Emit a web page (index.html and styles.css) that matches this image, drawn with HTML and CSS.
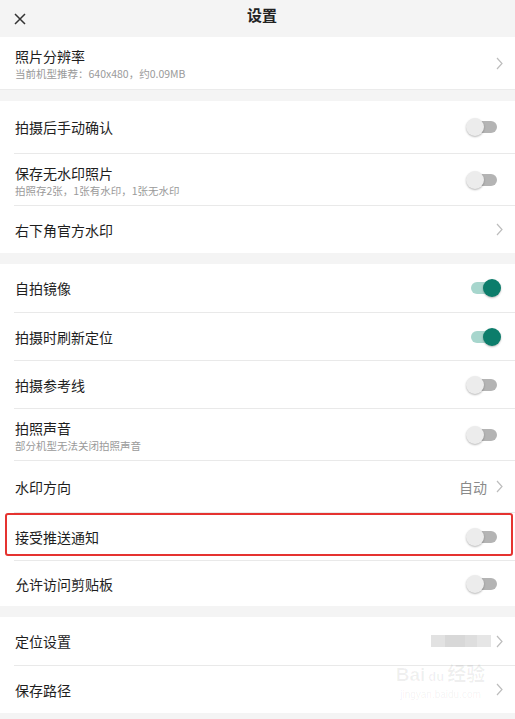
FILE: index.html
```html
<!DOCTYPE html>
<html lang="zh-CN">
<head>
    <meta charset="UTF-8">
    <title>设置</title>
    <link rel="stylesheet" href="styles.css">
</head>
<body>
<div class="page">
    <div class="topbar">
        <span class="close">
            <svg width="12" height="12" viewBox="0 0 12 12"><path d="M1 1L11 11M11 1L1 11" stroke="#333" stroke-width="1.5" fill="none"/></svg>
        </span>
        <h1>设置</h1>
    </div>

    <div class="group first">
        <div class="row tall">
            <div class="text">
                <div class="title">照片分辨率</div>
                <div class="sub">当前机型推荐：640x480，约0.09MB</div>
            </div>
            <svg class="arrow" width="7" height="13" viewBox="0 0 7 13"><path d="M1 1L6 6.5L1 12" stroke="#bdbdbd" stroke-width="1.2" fill="none"/></svg>
        </div>
    </div>

    <div class="group">
        <div class="row tall">
            <div class="title">拍摄后手动确认</div>
            <span class="switch"><span class="knob"></span></span>
        </div>
        <div class="row tall">
            <div class="text">
                <div class="title">保存无水印照片</div>
                <div class="sub">拍照存2张，1张有水印，1张无水印</div>
            </div>
            <span class="switch"><span class="knob"></span></span>
        </div>
        <div class="row">
            <div class="title">右下角官方水印</div>
            <svg class="arrow" width="7" height="13" viewBox="0 0 7 13"><path d="M1 1L6 6.5L1 12" stroke="#bdbdbd" stroke-width="1.2" fill="none"/></svg>
        </div>
    </div>

    <div class="group">
        <div class="row">
            <div class="title">自拍镜像</div>
            <span class="switch on"><span class="knob"></span></span>
        </div>
        <div class="row">
            <div class="title">拍摄时刷新定位</div>
            <span class="switch on"><span class="knob"></span></span>
        </div>
        <div class="row">
            <div class="title">拍摄参考线</div>
            <span class="switch"><span class="knob"></span></span>
        </div>
        <div class="row tall">
            <div class="text">
                <div class="title">拍照声音</div>
                <div class="sub">部分机型无法关闭拍照声音</div>
            </div>
            <span class="switch"><span class="knob"></span></span>
        </div>
        <div class="row tall">
            <div class="title">水印方向</div>
            <span class="value">自动</span>
            <svg class="arrow" width="7" height="13" viewBox="0 0 7 13"><path d="M1 1L6 6.5L1 12" stroke="#bdbdbd" stroke-width="1.2" fill="none"/></svg>
        </div>
        <div class="row marked">
            <div class="title">接受推送通知</div>
            <span class="switch"><span class="knob"></span></span>
        </div>
        <div class="row short">
            <div class="title">允许访问剪贴板</div>
            <span class="switch"><span class="knob"></span></span>
        </div>
    </div>

    <div class="group">
        <div class="row">
            <div class="title">定位设置</div>
            <span class="blur"></span>
            <svg class="arrow" width="7" height="13" viewBox="0 0 7 13"><path d="M1 1L6 6.5L1 12" stroke="#bdbdbd" stroke-width="1.2" fill="none"/></svg>
        </div>
        <div class="row">
            <div class="title">保存路径</div>
            <svg class="arrow" width="7" height="13" viewBox="0 0 7 13"><path d="M1 1L6 6.5L1 12" stroke="#bdbdbd" stroke-width="1.2" fill="none"/></svg>
        </div>
    </div>

    <div class="mark">
        <div class="mark-logo">Bai<span class="paw">du</span>经验</div>
        <div class="mark-url">jingyan.baidu.com</div>
    </div>
</div>
</body>
</html>
```

FILE: styles.css
```css
* {
    margin: 0;
    padding: 0;
    box-sizing: border-box;
}

body {
    background: #f4f4f4;
    font-family: "Noto Sans CJK SC", "Noto Sans", sans-serif;
    color: #1e1e1e;
}

.page {
    position: relative;
    width: 515px;
    min-height: 719px;
    padding-bottom: 6px;
}

.topbar {
    height: 37px;
    display: flex;
    align-items: center;
    position: relative;
}

.topbar .close {
    display: flex;
    margin-left: 14px;
}

.topbar h1 {
    position: absolute;
    left: 0;
    right: 0;
    top: 5px;
    text-align: center;
    padding-left: 9px;
    font-size: 15px;
    line-height: 20px;
    font-weight: bold;
    color: #222;
    pointer-events: none;
}

.group {
    background: #fff;
    margin-top: 11px;
}

.group.first {
    margin-top: 0;
    border-bottom: 1px solid #ebebeb;
}

.row {
    position: relative;
    display: flex;
    align-items: center;
    height: 48px;
    margin-left: 14px;
    padding-left: 1px;
    padding-right: 12px;
    border-top: 1px solid #e9e9e9;
}

.row:first-child {
    border-top: 0;
}

.row.tall {
    height: 52px;
}

.row.short {
    height: 46px;
}

.text {
    flex: 1;
    padding-top: 1px;
}

.row > .title {
    flex: 1;
}

.title {
    font-size: 14px;
    line-height: 20px;
    color: #1e1e1e;
}

.sub {
    font-size: 10.5px;
    line-height: 15px;
    color: #9a9a9a;
}

.arrow {
    display: block;
}

.value {
    font-size: 14px;
    color: #8a8a8a;
    margin-right: 9px;
}

.switch {
    position: relative;
    width: 24px;
    height: 12px;
    border-radius: 6px;
    background: #b4b4b4;
    margin-right: 6px;
}

.switch .knob {
    position: absolute;
    top: -3px;
    left: -7px;
    width: 18px;
    height: 18px;
    border-radius: 50%;
    background: #ececec;
    box-shadow: 0 1px 2px rgba(0, 0, 0, 0.28);
}

.switch.on {
    background: #a7d6cd;
    margin-right: 8px;
}

.switch.on .knob {
    left: 12px;
    background: #0c7d6b;
}

.marked::after {
    content: "";
    position: absolute;
    left: -9px;
    right: 2px;
    top: 0;
    bottom: 4px;
    border: 2px solid #e53330;
    border-radius: 3px;
}

.blur {
    width: 60px;
    height: 12px;
    margin-right: 5px;
    background: linear-gradient(90deg, #e2e2e2 0, #e2e2e2 14px, #d8d8d8 14px, #d8d8d8 34px, #dedede 34px, #dedede 46px, #e6e6e6 46px);
}

.mark {
    position: absolute;
    left: 393px;
    top: 664px;
    width: 95px;
    text-align: center;
    color: rgba(0, 0, 0, 0.06);
    font-family: "Liberation Sans", "Noto Sans CJK SC", sans-serif;
    pointer-events: none;
}

.mark-logo {
    font-size: 19px;
    line-height: 22px;
    font-weight: bold;
}

.mark-logo .paw {
    font-size: 13px;
    margin: 0 3px;
}

.mark-url {
    font-size: 10px;
    line-height: 14px;
}
```
